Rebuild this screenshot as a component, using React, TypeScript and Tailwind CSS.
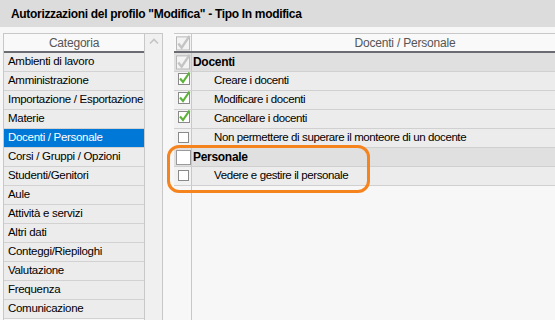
import React from "react";

const cats = [
  "Ambienti di lavoro",
  "Amministrazione",
  "Importazione / Esportazione",
  "Materie",
  "Docenti / Personale",
  "Corsi / Gruppi / Opzioni",
  "Studenti/Genitori",
  "Aule",
  "Attività e servizi",
  "Altri dati",
  "Conteggi/Riepiloghi",
  "Valutazione",
  "Frequenza",
  "Comunicazione",
];

function GrayCheck() {
  return (
    <svg width="16" height="17" viewBox="0 0 16 17" className="block">
      <rect x="0.5" y="2.5" width="14" height="14" fill="#f3f3f3" stroke="#b4b4b4" />
      <path d="M2.5 9.5 L6 14 L14.5 1.5" fill="none" stroke="#c4c4c4" strokeWidth="2.6" />
    </svg>
  );
}

function GreenCheck() {
  return (
    <svg width="13" height="14" viewBox="0 0 13 14" className="block">
      <rect x="0.5" y="2.5" width="11" height="11" fill="#ffffff" stroke="#8a8a8a" />
      <path d="M2 7.5 L5 11 L11.5 1.5" fill="none" stroke="#5db33a" strokeWidth="2.2" />
    </svg>
  );
}

function SmallBox() {
  return <div className="w-[11px] h-[11px] border border-[#8a8a8a] bg-white" />;
}

function BigBox() {
  return <div className="w-[15px] h-[15px] border border-[#9a9a9a] bg-white" />;
}

type Row = { kind: "group" | "item"; label: string; check: "gray" | "green" | "emptyBig" | "emptySmall" };

const rows: Row[] = [
  { kind: "group", label: "Docenti", check: "gray" },
  { kind: "item", label: "Creare i docenti", check: "green" },
  { kind: "item", label: "Modificare i docenti", check: "green" },
  { kind: "item", label: "Cancellare i docenti", check: "green" },
  { kind: "item", label: "Non permettere di superare il monteore di un docente", check: "emptySmall" },
  { kind: "group", label: "Personale", check: "emptyBig" },
  { kind: "item", label: "Vedere e gestire il personale", check: "emptySmall" },
];

export default function App() {
  return (
    <div
      className="relative w-[555px] h-[320px] overflow-hidden bg-[#f7f7f7] text-[12px] tracking-[-0.2px] text-black"
      style={{ fontFamily: "'Liberation Sans', Arial, sans-serif" }}
    >
      <div className="h-[27px] bg-[#dcdcdc] pl-[11px] flex items-center font-bold tracking-[-0.32px]">
        Autorizzazioni del profilo "Modifica" - Tipo In modifica
      </div>
      <div className="flex mt-[6px] h-[300px]">
        {/* Category list */}
        <div className="ml-[3px] w-[142px] border-l border-t border-r border-[#c8c8c8] flex flex-col shrink-0">
          <div className="h-[19px] border-b-2 border-[#6b6b72] bg-[#f9f9f9] flex items-center justify-center text-[#555]">
            Categoria
          </div>
          {cats.map((c) => {
            const sel = c === "Docenti / Personale";
            return (
              <div
                key={c}
                className={
                  "h-[19px] shrink-0 border-b border-[#d2d2d2] pl-[4px] flex items-center whitespace-nowrap text-[11.5px] tracking-[-0.3px] " +
                  (sel ? "bg-[#0078d7] text-white" : "bg-[#ececec]")
                }
              >
                {c}
              </div>
            );
          })}
        </div>
        {/* Scrollbar */}
        <div className="w-[18px] shrink-0 border-t border-r border-[#c8c8c8] bg-[#f0f0f0] flex flex-col items-center justify-between pt-[4px] pb-[1px]">
          <svg width="10" height="7" viewBox="0 0 10 7">
            <path d="M1 5.5 L5 1.5 L9 5.5" fill="none" stroke="#c4c4c4" strokeWidth="1.6" />
          </svg>
          <svg width="10" height="7" viewBox="0 0 10 7">
            <path d="M1 1.5 L5 5.5 L9 1.5" fill="none" stroke="#c4c4c4" strokeWidth="1.6" />
          </svg>
        </div>
        {/* Permissions panel */}
        <div className="ml-[11px] w-[444px] shrink-0 border-t border-[#c8c8c8] flex flex-col">
          <div className="h-[19px] border-b-2 border-[#6b6b72] bg-[#f9f9f9] flex">
            <div className="w-[18px] border-r border-[#c8c8c8] flex items-start pl-[2px] pt-0">
              <GrayCheck />
            </div>
            <div className="flex-1 flex items-center justify-center text-[#555]">Docenti / Personale</div>
          </div>
          {rows.map((r) => (
            <div
              key={r.label}
              className={
                "h-[19px] shrink-0 flex border-b border-[#d0d0d0] " +
                (r.kind === "group" ? "bg-[#e0e0e0]" : "bg-[#ececec]")
              }
            >
              <div
                className={
                  "w-[18px] shrink-0 border-r border-[#c8c8c8] flex " +
                  (r.kind === "group" ? "pl-[2px] items-start" : "pl-[4px] items-start") +
                  (r.kind === "item" ? " bg-[#f2f2f2]" : "")
                }
              >
                {r.check === "gray" && <GrayCheck />}
                {r.check === "green" && (
                  <div className="-mt-[1px]">
                    <GreenCheck />
                  </div>
                )}
                {r.check === "emptyBig" && (
                  <div className="mt-[2px]">
                    <BigBox />
                  </div>
                )}
                {r.check === "emptySmall" && (
                  <div className="mt-[3px]">
                    <SmallBox />
                  </div>
                )}
              </div>
              <div
                className={
                  "flex-1 flex items-center whitespace-nowrap " +
                  (r.kind === "group" ? "pl-[1px] font-bold tracking-[-0.3px]" : "pl-[22px] text-[11.5px] tracking-[-0.4px]")
                }
              >
                {r.label}
              </div>
            </div>
          ))}
          <div className="flex-1 flex">
            <div className="w-[18px] border-r border-[#c8c8c8]" />
            <div className="flex-1" />
          </div>
        </div>
      </div>
      {/* Orange highlight */}
      <div className="absolute left-[167px] top-[145px] w-[203px] h-[48px] border-[3px] border-[#f5841f] rounded-[12px]" />
    </div>
  );
}
